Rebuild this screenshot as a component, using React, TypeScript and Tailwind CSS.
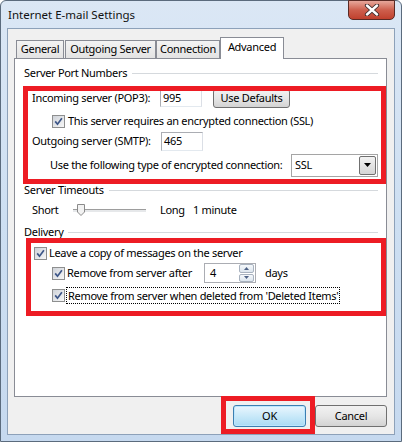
import React from "react";

function Check() {
  return (
    <span className="flex h-[13px] w-[13px] shrink-0 items-center justify-center border border-[#8e8f8f] bg-[#f4f4f4]">
      <span className="flex h-[11px] w-[11px] items-center justify-center bg-gradient-to-br from-[#cfd3d9] to-[#f7f7f7]">
        <svg width="9" height="9" viewBox="0 0 9 9">
          <path d="M1.2 4.4 L3.5 7.2 L7.9 1.3" fill="none" stroke="#3d5688" strokeWidth="1.7" />
        </svg>
      </span>
    </span>
  );
}

function GroupHeader({ label, className }: { label: string; className: string }) {
  return (
    <div className={"flex h-[16px] items-center pl-[9px] pr-[8px] " + className}>
      <span className="whitespace-nowrap leading-[16px]">{label}</span>
      <span className="ml-[5px] h-px flex-1 bg-[#d5d9dd]" />
    </div>
  );
}

function Button({ label, className }: { label: string; className: string }) {
  return (
    <div
      className={
        "flex items-center justify-center whitespace-nowrap rounded-[3px] border border-[#707070] bg-gradient-to-b from-[#f2f2f2] via-[#e6e6e6] to-[#d3d3d3] " +
        className
      }
    >
      {label}
    </div>
  );
}

export default function App() {
  return (
    <div className="relative h-[442px] w-[402px] overflow-hidden bg-white font-['Noto_Sans',sans-serif] text-[11px] tracking-[-0.3px] text-black">
      <div className="flex h-full flex-col rounded-t-[6px] border border-[#5b6b7d] bg-gradient-to-b from-[#dbe7f5] via-[#cddff2] to-[#c6d9ef] px-[6px] pb-[6px]">
        {/* Title bar */}
        <div className="flex h-[27px] items-start justify-between">
          <span className="whitespace-nowrap pl-[1px] pt-[6px] text-[11.5px] leading-[16px] tracking-normal text-[#111]">
            Internet E-mail Settings
          </span>
          <div className="-mt-px flex h-[20px] w-[47px] items-center justify-center rounded-b-[5px] border border-[#5a2a24] bg-gradient-to-b from-[#e6a79b] via-[#cd5f4d] to-[#c0402d]">
            <svg width="16" height="12" viewBox="0 0 16 12">
              <path d="M3 1.5 L13 10.5 M13 1.5 L3 10.5" stroke="#3a2a2a" strokeWidth="4.2" strokeLinecap="round" />
              <path d="M3 1.5 L13 10.5 M13 1.5 L3 10.5" stroke="#ffffff" strokeWidth="2.4" strokeLinecap="round" />
            </svg>
          </div>
        </div>

        {/* Client area */}
        <div className="flex flex-1 flex-col border border-[#8da1b9] bg-[#f0f0f0] pt-[8px]">
          {/* Tabs */}
          <div className="ml-[8px] flex h-[21px] items-end whitespace-nowrap">
            <div className="flex h-[18px] w-[48px] items-center justify-center border border-b-0 border-[#898c95] bg-gradient-to-b from-[#f3f3f3] to-[#e3e3e3]">
              General
            </div>
            <div className="ml-[1px] flex h-[18px] w-[91px] items-center justify-center border border-b-0 border-[#898c95] bg-gradient-to-b from-[#f3f3f3] to-[#e3e3e3]">
              Outgoing Server
            </div>
            <div className="flex h-[18px] w-[64px] items-center justify-center border border-b-0 border-[#898c95] bg-gradient-to-b from-[#f3f3f3] to-[#e3e3e3]">
              Connection
            </div>
            <div className="relative z-10 -mb-px flex h-[22px] w-[64px] items-start justify-center border border-b-0 border-[#898c95] bg-white pt-[1px]">
              Advanced
            </div>
          </div>

          {/* Panel */}
          <div className="ml-[6px] mr-[7px] flex h-[339px] flex-col whitespace-nowrap border border-[#898c95] bg-white">
            <GroupHeader label="Server Port Numbers" className="mt-[6px]" />

            <div className="mt-[7px] flex h-[20px] items-center pl-[17px]">
              <span className="w-[128px]">Incoming server (POP3):</span>
              <div className="flex h-[18px] w-[42px] items-center border border-[#abadb3] border-b-[#e3e9ef] border-r-[#dbdfe6] pl-[2px]">995</div>
              <Button label="Use Defaults" className="ml-[11px] h-[19px] w-[77px]" />
            </div>

            <div className="mt-[3px] flex h-[20px] items-center gap-[3px] pl-[37px]">
              <Check />
              <span>This server requires an encrypted connection (SSL)</span>
            </div>

            <div className="flex h-[20px] items-center pl-[17px]">
              <span className="w-[129px]">Outgoing server (SMTP):</span>
              <div className="flex h-[19px] w-[42px] items-center border border-[#abadb3] border-b-[#e3e9ef] border-r-[#dbdfe6] pl-[2px]">465</div>
            </div>

            <div className="mt-[2px] flex h-[24px] items-center pl-[35px]">
              <span className="w-[241px]">Use the following type of encrypted connection:</span>
              <div className="flex h-[23px] w-[87px] items-center justify-between border border-[#a5a5a5] pl-[3px] pr-[1px]">
                <span>SSL</span>
                <div className="flex h-[19px] w-[17px] items-center justify-center rounded-[2px] border border-[#707070] bg-gradient-to-b from-[#f2f2f2] to-[#d5d5d5]">
                  <svg width="7" height="4" viewBox="0 0 7 4">
                    <path d="M0 0 L7 0 L3.5 4 Z" fill="#000" />
                  </svg>
                </div>
              </div>
            </div>

            <GroupHeader label="Server Timeouts" className="mt-[5px]" />

            <div className="mt-[2px] flex h-[20px] items-center pl-[17px]">
              <span className="w-[41px]">Short</span>
              <div className="relative flex h-[20px] w-[73px] items-center">
                <div className="h-[3px] w-full border-t border-t-[#9d9d9d] bg-[#e6e8ea]" />
                <svg className="absolute left-[4px] top-[4px]" width="8" height="12" viewBox="0 0 8 12">
                  <path d="M0.5 0.5 H7.5 V8 L4 11.5 L0.5 8 Z" fill="#f2f2f2" stroke="#8a8a8a" />
                </svg>
              </div>
              <span className="ml-[14px] w-[33px]">Long</span>
              <span>1 minute</span>
            </div>

            <GroupHeader label="Delivery" className="mt-[4px]" />

            <div className="mt-[3px] flex h-[20px] items-center gap-[2px] pl-[19px]">
              <Check />
              <span>Leave a copy of messages on the server</span>
            </div>

            <div className="flex h-[20px] items-center pl-[37px]">
              <Check />
              <span className="ml-[2px] w-[137px]">Remove from server after</span>
              <div className="flex h-[20px] w-[52px] items-center justify-between border border-[#abadb3] pl-[5px] pr-px">
                <span>4</span>
                <div className="flex h-[18px] w-[15px] flex-col gap-px">
                  <div className="flex flex-1 items-center justify-center rounded-[2px] border border-[#a8b2bf] bg-gradient-to-b from-[#f5f8fb] to-[#dde6ee]">
                    <svg width="5" height="3" viewBox="0 0 5 3"><path d="M0 3 L5 3 L2.5 0 Z" fill="#4d6185" /></svg>
                  </div>
                  <div className="flex flex-1 items-center justify-center rounded-[2px] border border-[#a8b2bf] bg-gradient-to-b from-[#f5f8fb] to-[#dde6ee]">
                    <svg width="5" height="3" viewBox="0 0 5 3"><path d="M0 0 L5 0 L2.5 3 Z" fill="#4d6185" /></svg>
                  </div>
                </div>
              </div>
              <span className="ml-[9px]">days</span>
            </div>

            <div className="mt-[2px] flex h-[20px] items-center pl-[37px]">
              <Check />
              <span className="ml-px border border-dotted border-black px-px leading-[15px]">
                Remove from server when deleted from 'Deleted Items'
              </span>
            </div>
          </div>

          {/* Bottom buttons */}
          <div className="mt-[8px] flex h-[22px] justify-end pr-[7px]">
            <div className="flex h-[22px] w-[73px] items-center justify-center rounded-[3px] border border-[#3c7fb1] bg-gradient-to-b from-[#eaf6fd] via-[#c9e9f9] to-[#a9daf4] shadow-[inset_0_0_0_1px_#bde6fd]">
              OK
            </div>
            <Button label="Cancel" className="ml-[9px] h-[22px] w-[72px]" />
          </div>
        </div>
      </div>

      {/* Red annotation boxes */}
      <div className="absolute left-[23px] top-[86px] h-[98px] w-[363px] border-[5px] border-[#ed1c24]" />
      <div className="absolute left-[26px] top-[238px] h-[78px] w-[360px] border-[5px] border-[#ed1c24]" />
      <div className="absolute left-[221px] top-[396px] h-[38px] w-[94px] border-[5px] border-[#ed1c24]" />
    </div>
  );
}
